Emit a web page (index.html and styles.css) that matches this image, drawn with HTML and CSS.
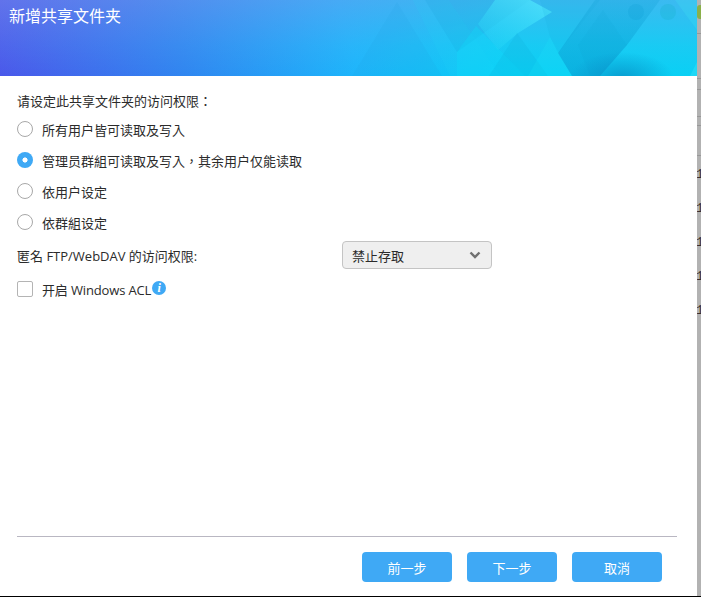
FILE: index.html
```html
<!DOCTYPE html>
<html lang="zh-TW">
<head>
<meta charset="utf-8">
<title>新增共享文件夹</title>
<link rel="stylesheet" href="styles.css">
</head>
<body>
<div class="screen">
  <main class="dialog">
    <header class="banner">
      <svg class="banner-art" viewBox="0 0 697 76" preserveAspectRatio="none" aria-hidden="true">
        <defs>
          <linearGradient id="dark" x1="0" y1="0" x2="0" y2="1"><stop offset="0" stop-color="#0a9bd0" stop-opacity=".22"/><stop offset="1" stop-color="#0a94cc" stop-opacity=".5"/></linearGradient>
          <linearGradient id="glow" x1="0" y1="1" x2="1" y2="0"><stop offset="0" stop-color="#28e0fa" stop-opacity=".12"/><stop offset="1" stop-color="#58eeff" stop-opacity=".7"/></linearGradient>
          <radialGradient id="shade" cx=".5" cy=".5" r=".5"><stop offset="0" stop-color="#0a8cc4" stop-opacity=".75"/><stop offset="1" stop-color="#0a8cc4" stop-opacity="0"/></radialGradient>
        </defs>
        <polygon points="352,76 397,2 442,76" fill="#1e9fe0" fill-opacity=".12"/>
        <polygon points="408,-10 442,-10 500,76 450,76" fill="#20d8f8" fill-opacity=".14"/>
        <polygon points="425,0 530,0 457,52" fill="#1490d0" fill-opacity=".12"/>
        <polygon points="457,52 476,26 525,76 457,76" fill="#10e0fa" fill-opacity=".28"/>
        <polygon points="478,24 495,0 530,0 552,12 518,33 498,50" fill="url(#glow)"/>
        <polygon points="489,76 517,33 548,76" fill="#0ba0d0" fill-opacity=".15"/>
        <polygon points="528,76 550,37 572,76" fill="#1de4fa" fill-opacity=".2"/>
        <polygon points="540,0 600,0 558,53 550,37" fill="#0fa8d8" fill-opacity=".12"/>
        <polygon points="558,53 595,0 660,0 627,45 600,76 572,76" fill="url(#dark)"/>
        <polygon points="603,10 627,45 600,76 590,76 578,45" fill="#0a9bd0" fill-opacity=".1"/>
        <ellipse cx="622" cy="78" rx="52" ry="26" fill="url(#shade)"/>
        <polygon points="675,0 697,30 697,0" fill="#40e4f4" fill-opacity=".25"/>
        <polygon points="690,76 697,62 697,76" fill="#30e0f8" fill-opacity=".5"/>
        <circle cx="636" cy="12" r="8" fill="#0a9bd0" fill-opacity=".2"/>
        <circle cx="668" cy="12" r="8" fill="#12b0c8" fill-opacity=".25"/>
      </svg>
      <h1 class="banner-title">新增共享文件夹</h1>
    </header>

    <section class="form">
      <p class="prompt">请设定此共享文件夹的访问权限：</p>
      <div class="options">
        <label class="option"><span class="radio"></span>所有用户皆可读取及写入</label>
        <label class="option"><span class="radio radio-on"></span>管理员群組可读取及写入，其余用户仅能读取</label>
        <label class="option"><span class="radio"></span>依用户设定</label>
        <label class="option"><span class="radio"></span>依群組设定</label>
      </div>
      <div class="ftp-row">
        <span class="ftp-label">匿名 FTP/WebDAV 的访问权限:</span>
        <div class="select">
          <span>禁止存取</span>
          <svg class="chevron" width="12" height="8" viewBox="0 0 12 8" aria-hidden="true"><path d="M1.5 1.5 6 6l4.5-4.5" fill="none" stroke="#707070" stroke-width="2.4"/></svg>
        </div>
      </div>
      <label class="acl-row">
        <span class="checkbox"></span>
        <span class="acl-text">开启 Windows ACL</span>
        <span class="info">i</span>
      </label>
    </section>

    <footer class="footer">
      <div class="actions">
        <button class="btn">前一步</button>
        <button class="btn">下一步</button>
        <button class="btn">取消</button>
      </div>
    </footer>
  </main>
  <aside class="backdrop">
    <span class="dot"></span>
    <span class="tick t1"></span><span class="tick t2"></span><span class="tick t3"></span><span class="tick t4"></span><span class="tick t5"></span><span class="tick t6"></span>
    <span class="glyphs"><b>1</b><b>1</b><b>1</b><b>1</b><b>1</b></span>
  </aside>
</div>
<div class="base-line"></div>
</body>
</html>
```

FILE: styles.css
```css
* { box-sizing: border-box; }
html, body { margin: 0; height: 597px; overflow: hidden; background: #fff; }
body {
  font-family: "Open Sans", "Noto Sans CJK TC", sans-serif;
  font-size: 13px;
  color: #2b2b2b;
}
.screen { display: flex; height: 596px; }
.dialog { width: 697px; display: flex; flex-direction: column; background: #fff; }
.banner {
  position: relative;
  height: 76px;
  flex: none;
  overflow: hidden;
  background: linear-gradient(75deg, #4a58ea 0%, #2f86f0 26%, #1cb6fb 50%, #08d0f4 72%, #0ad0f4 100%);
}
.banner::before {
  content: "";
  position: absolute;
  inset: 0;
  background: linear-gradient(180deg, rgba(140,150,235,.38) 0%, rgba(120,170,240,.14) 60%, rgba(255,255,255,0) 100%);
}
.banner-art { position: absolute; inset: 0; width: 100%; height: 100%; }
.banner-title {
  position: relative;
  margin: 0;
  padding: 3px 0 0 9px;
  font-family: "Noto Sans CJK TC", sans-serif;
  font-size: 16px;
  font-weight: 400;
  line-height: 24px;
  color: #fff;
}
.form { flex: 1; padding: 16px 0 0 17px; }
.prompt { margin: 0; height: 18px; line-height: 18px; font-family: "Noto Sans CJK TC", sans-serif; }
.options { display: flex; flex-direction: column; gap: 15px; margin-top: 11px; }
.option {
  display: flex;
  align-items: center;
  gap: 9px;
  height: 16px;
  font-family: "Noto Sans CJK TC", sans-serif;
  white-space: nowrap;
}
.radio {
  width: 16px;
  height: 16px;
  flex: none;
  border: 1px solid #a8a8a8;
  border-radius: 50%;
  background: #fff;
}
.radio-on {
  border: 0;
  background: radial-gradient(circle, #fff 0 2.2px, #3fa9f5 2.9px);
}
.ftp-row { display: flex; align-items: center; margin-top: 11px; height: 28px; }
.ftp-label { width: 325px; flex: none; }
.select {
  width: 150px;
  height: 28px;
  display: flex;
  align-items: center;
  justify-content: space-between;
  padding: 0 10px 0 9px;
  background: #efefef;
  border: 1px solid #c4c4c4;
  border-radius: 4px;
  font-family: "Noto Sans CJK TC", sans-serif;
}
.acl-row { display: flex; align-items: center; margin-top: 12px; height: 16px; }
.checkbox {
  width: 16px;
  height: 16px;
  flex: none;
  border: 1px solid #b4b4b4;
  border-radius: 2px;
  background: #fff;
  margin-right: 9px;
}
.acl-text { letter-spacing: -.15px; }
.info {
  width: 14px;
  height: 14px;
  margin: -2px 0 0 1px;
  flex: none;
  border-radius: 50%;
  background: #3fa9f5;
  color: #fff;
  font: italic 700 12px/14px "Liberation Serif", serif;
  text-align: center;
}
.footer { flex: none; height: 60px; margin: 0 20px 0 17px; border-top: 1px solid #b9b7c2; }
.actions { display: flex; justify-content: flex-end; gap: 15px; padding: 15px 15px 0 0; }
.btn {
  width: 90px;
  height: 30px;
  border: 0;
  border-radius: 4px;
  background: #3fa9f5;
  color: #fff;
  font-family: "Noto Sans CJK TC", sans-serif;
  font-size: 13px;
  padding: 0;
}
.backdrop {
  position: relative;
  width: 4px;
  flex: none;
  background: #b2b2b2;
  overflow: hidden;
}
.dot { position: absolute; top: 5px; left: 0; width: 4px; height: 14px; background: #8ab04a; border-radius: 3px 0 0 3px; }
.tick { position: absolute; left: 0; width: 4px; height: 1px; background: #989898; }
.t1 { top: 33px; }
.t2 { top: 78px; }
.t3 { top: 89px; }
.t4 { top: 116px; }
.t5 { top: 125px; }
.t6 { top: 155px; }
.glyphs { display: flex; flex-direction: column; gap: 17px; position: absolute; top: 166px; left: 0; }
.glyphs b { display: block; font: 400 13px/17px "Liberation Mono", monospace; color: #3a3030; margin-left: -1px; }
.base-line { height: 1px; background: #000; }
```
